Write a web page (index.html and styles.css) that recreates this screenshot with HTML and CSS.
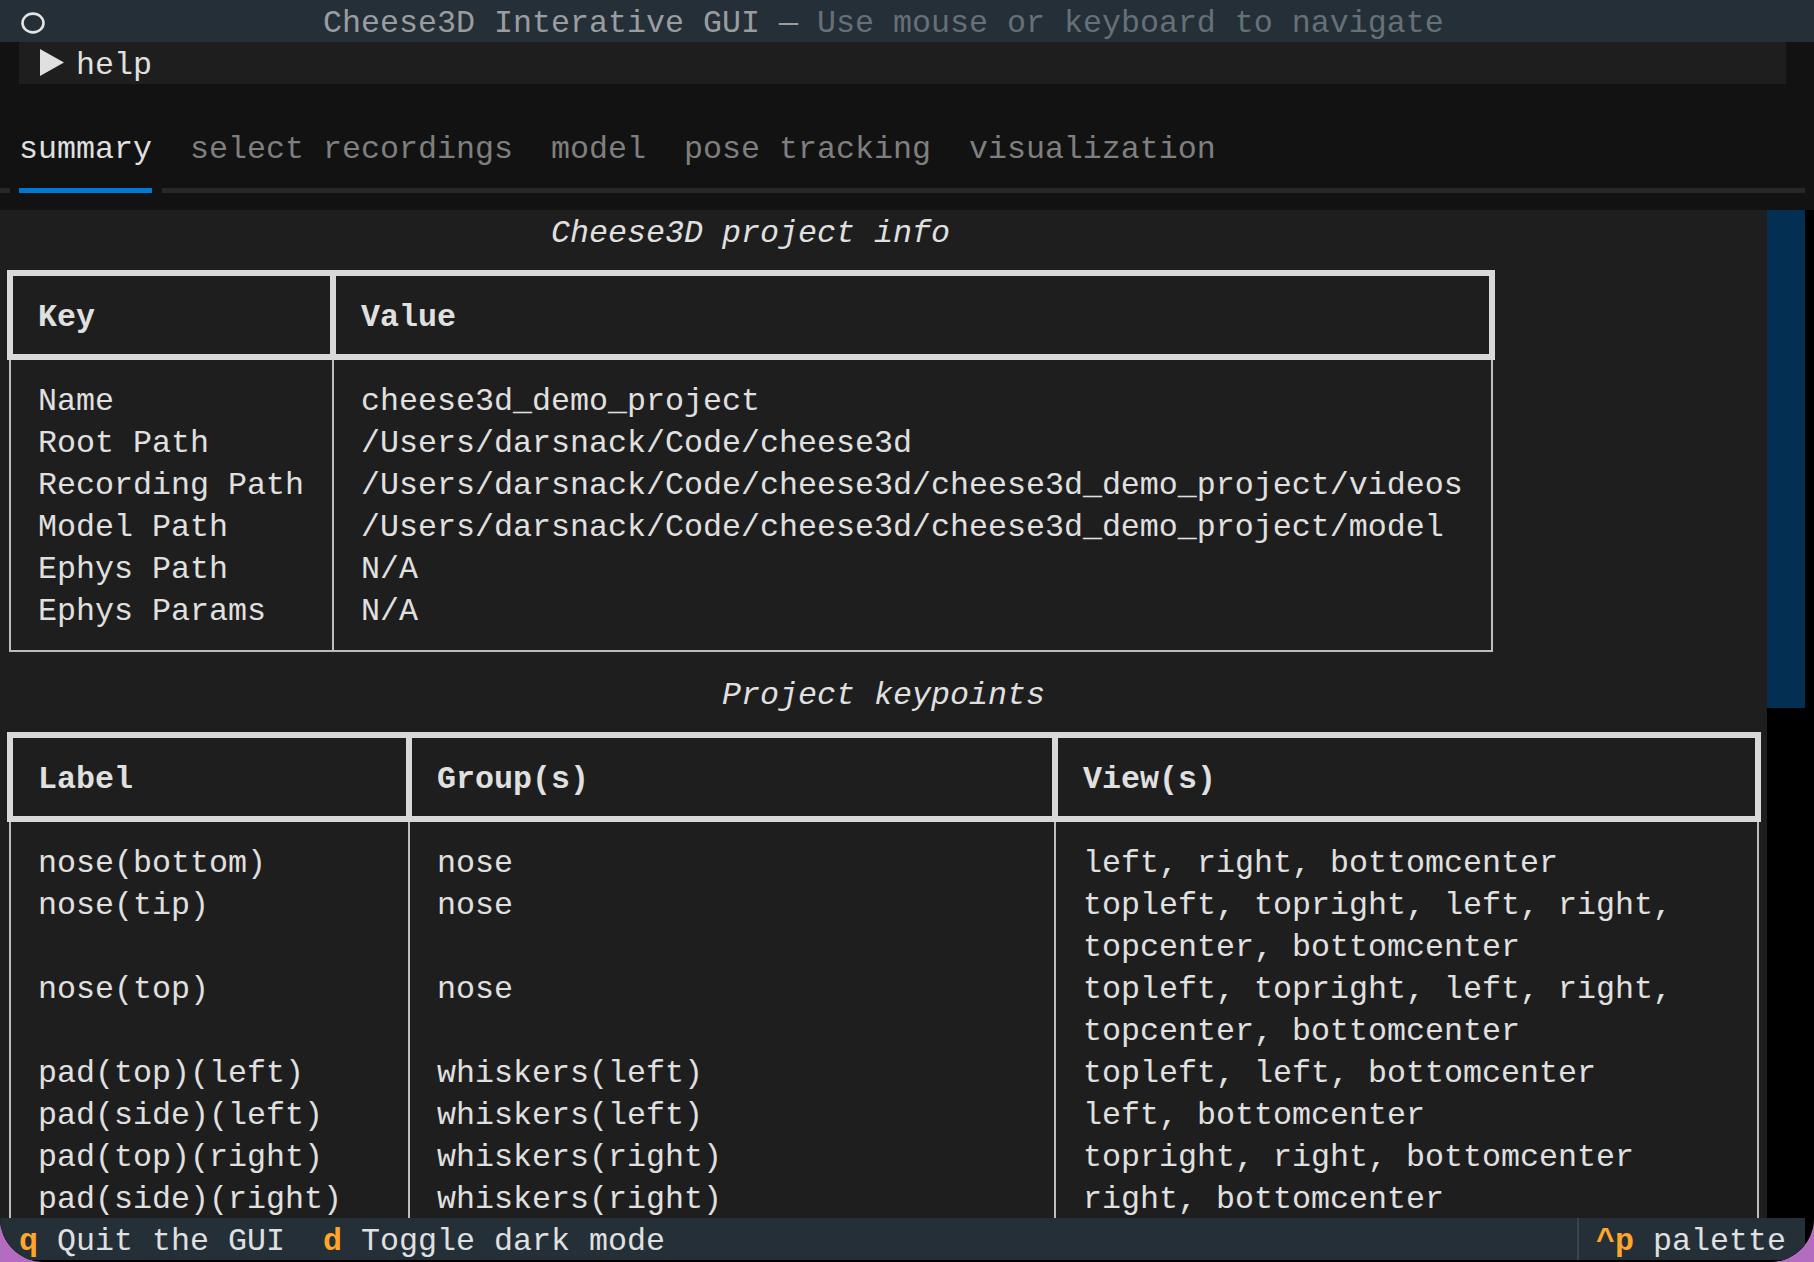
FILE: index.html
```html
<!DOCTYPE html>
<html lang="en">
<head>
<meta charset="utf-8">
<title>Cheese3D Interative GUI</title>
<link rel="stylesheet" href="styles.css">
</head>
<body>
<div class="app">
  <header class="titlebar">
    <div class="titlebar-icon">
      <svg width="24" height="22" viewBox="0 0 24 22" aria-hidden="true"><ellipse cx="12" cy="11" rx="10.5" ry="9.4" fill="none" stroke="#e4e4e4" stroke-width="2.6"/></svg>
    </div>
    <div class="titlebar-text"><span class="title">Cheese3D Interative GUI</span><span class="title"> — </span><span class="subtitle">Use mouse or keyboard to navigate</span></div>
  </header>

  <div class="help-row">
    <div class="collapsible">
      <svg class="caret" width="24" height="27" viewBox="0 0 24 27" aria-hidden="true"><path d="M0 0 L24 13.5 L0 27 Z" fill="#e0e0e0"/></svg>
      <span class="collapsible-label">help</span>
    </div>
  </div>

  <div class="blank-row"></div>

  <nav class="tabs">
    <span class="tab active">summary</span>
    <span class="tab">select recordings</span>
    <span class="tab">model</span>
    <span class="tab">pose tracking</span>
    <span class="tab">visualization</span>
  </nav>
  <div class="tab-underline">
    <span class="u-lead"></span>
    <span class="u-active"></span>
    <span class="u-rest"></span>
  </div>

  <main class="content-row">
    <section class="panel">
      <div class="block kv">
        <h2 class="caption">Cheese3D project info</h2>
        <div class="grid-table">
          <div class="thead">
            <div class="th">Key</div>
            <div class="th">Value</div>
          </div>
          <div class="tbody">
            <div class="td">Name</div><div class="td">cheese3d_demo_project</div>
            <div class="td">Root Path</div><div class="td">/Users/darsnack/Code/cheese3d</div>
            <div class="td">Recording Path</div><div class="td">/Users/darsnack/Code/cheese3d/cheese3d_demo_project/videos</div>
            <div class="td">Model Path</div><div class="td">/Users/darsnack/Code/cheese3d/cheese3d_demo_project/model</div>
            <div class="td">Ephys Path</div><div class="td">N/A</div>
            <div class="td">Ephys Params</div><div class="td">N/A</div>
          </div>
        </div>
      </div>

      <div class="block kp">
        <h2 class="caption">Project keypoints</h2>
        <div class="grid-table">
          <div class="thead">
            <div class="th">Label</div>
            <div class="th">Group(s)</div>
            <div class="th">View(s)</div>
          </div>
          <div class="tbody">
            <div class="td">nose(bottom)</div><div class="td">nose</div><div class="td">left, right, bottomcenter</div>
            <div class="td">nose(tip)</div><div class="td">nose</div><div class="td">topleft, topright, left, right, topcenter, bottomcenter</div>
            <div class="td">nose(top)</div><div class="td">nose</div><div class="td">topleft, topright, left, right, topcenter, bottomcenter</div>
            <div class="td">pad(top)(left)</div><div class="td">whiskers(left)</div><div class="td">topleft, left, bottomcenter</div>
            <div class="td">pad(side)(left)</div><div class="td">whiskers(left)</div><div class="td">left, bottomcenter</div>
            <div class="td">pad(top)(right)</div><div class="td">whiskers(right)</div><div class="td">topright, right, bottomcenter</div>
            <div class="td">pad(side)(right)</div><div class="td">whiskers(right)</div><div class="td">right, bottomcenter</div>
          </div>
        </div>
      </div>
    </section>
    <div class="scrollbar"><div class="thumb"></div></div>
  </main>

  <div class="footer-row">
    <footer class="footer">
      <span class="binding"><span class="key">q</span> Quit the GUI</span>
      <span class="binding"><span class="key">d</span> Toggle dark mode</span>
      <span class="palette"><span class="key">^p</span> palette</span>
    </footer>
  </div>
</div>
</body>
</html>
```

FILE: styles.css
```css
* {
  box-sizing: border-box;
}

html,
body {
  margin: 0;
  padding: 0;
}

body {
  background: #b36cbf;
  font-family: "Liberation Mono", "DejaVu Sans Mono", monospace;
  font-size: 31.66px;
  color: #e0e0e0;
}

.app {
  width: 1814px;
  height: 1262px;
  overflow: hidden;
  background: #121212;
  display: flex;
  flex-direction: column;
  border-radius: 0 0 44px 44px;
}

/* ---------- title bar ---------- */
.titlebar {
  flex: none;
  height: 42px;
  background: #242f38;
  display: flex;
  align-items: center;
  padding-top: 6px;
}

.titlebar-icon {
  width: 323px;
  flex: none;
  padding-left: 21px;
  display: flex;
  align-items: center;
  margin-bottom: 3px;
}

.titlebar-text {
  line-height: 36px;
  white-space: pre;
}

.title {
  color: #9a9da0;
}

.subtitle {
  color: #667077;
}

/* ---------- help collapsible ---------- */
.help-row {
  flex: none;
  height: 42px;
  width: 1805px;
  padding: 0 19px;
}

.collapsible {
  height: 100%;
  background: #1e1e1e;
  display: flex;
  align-items: flex-start;
  padding: 6px 0 0 21px;
}

.caret {
  flex: none;
  margin-top: 1px;
  margin-right: 12px;
}

.collapsible-label {
  line-height: 36px;
}

.blank-row {
  flex: none;
  height: 42px;
}

/* ---------- tabs ---------- */
.tabs {
  flex: none;
  height: 42px;
  display: flex;
  padding-top: 6px;
}

.tab {
  padding: 0 19px;
  line-height: 36px;
  white-space: pre;
  color: #7f7f7f;
}

.tab.active {
  color: #e0e0e0;
}

.tab-underline {
  flex: none;
  height: 42px;
  width: 1805px;
  display: flex;
  align-items: center;
  gap: 9.5px;
  padding-top: 2px;
}

.u-lead,
.u-active,
.u-rest {
  height: 5px;
  background: #272727;
}

.u-lead {
  width: 9.5px;
}

.u-active {
  width: 133px;
  background: #0178d4;
}

.u-rest {
  flex: 1;
}

/* ---------- content ---------- */
.content-row {
  flex: none;
  height: 1008px;
  display: flex;
}

.panel {
  flex: none;
  width: 1767px;
  background: #1e1e1e;
  overflow: hidden;
}

.scrollbar {
  flex: 1;
  background: #000000;
}

.thumb {
  width: 38px;
  height: 498px;
  background: #022f52;
}

.block.kv {
  width: 1501px;
}

.block.kp {
  width: 1767px;
  margin-top: 20px;
}

.caption {
  margin: 0;
  padding-top: 3px;
  font-size: inherit;
  font-weight: 400;
  font-style: italic;
  line-height: 42px;
  text-align: center;
  white-space: pre;
}

.grid-table {
  margin: 15px 0 0 6.5px;
}

.kv .grid-table {
  width: 1488px;
}

.kp .grid-table {
  width: 1754px;
}

.thead {
  display: grid;
  border: 6px solid #d9d9d9;
}

.th {
  padding: 21px 0 15px 25.5px;
  line-height: 42px;
  font-weight: 700;
  white-space: pre;
}

.th:not(:last-child) {
  border-right: 6px solid #d9d9d9;
}

.tbody {
  display: grid;
  margin: 0 2px;
  border: 2px solid #bdbdbd;
  border-top: 0;
  padding: 21px 0 17px;
}

.td {
  padding-left: 27.5px;
  line-height: 42px;
}

.kv .thead {
  grid-template-columns: 323px 1fr;
}

.kv .tbody {
  grid-template-columns: 323px 1fr;
  background: linear-gradient(90deg, transparent 321px, #bdbdbd 321px, #bdbdbd 323px, transparent 323px);
}

.kp .thead {
  grid-template-columns: 399px 646px 1fr;
}

.kp .tbody {
  grid-template-columns: 399px 646px 1fr;
  padding-bottom: 60px;
  background: linear-gradient(90deg,
      transparent 397px, #bdbdbd 397px, #bdbdbd 399px, transparent 399px,
      transparent 1043px, #bdbdbd 1043px, #bdbdbd 1045px, transparent 1045px);
}

/* ---------- footer ---------- */
.footer-row {
  flex: none;
  height: 44px;
  background: #000000;
}

.footer {
  width: 1805px;
  height: 42px;
  background: #242f38;
  display: flex;
}

.binding {
  padding: 6px 19px 0;
  line-height: 36px;
  white-space: pre;
}

.key {
  color: #ffa62b;
  font-weight: 700;
}

.palette {
  margin-left: auto;
  border-left: 2px solid #3a454e;
  padding: 6px 19px 0 17px;
  line-height: 36px;
  white-space: pre;
}
```
